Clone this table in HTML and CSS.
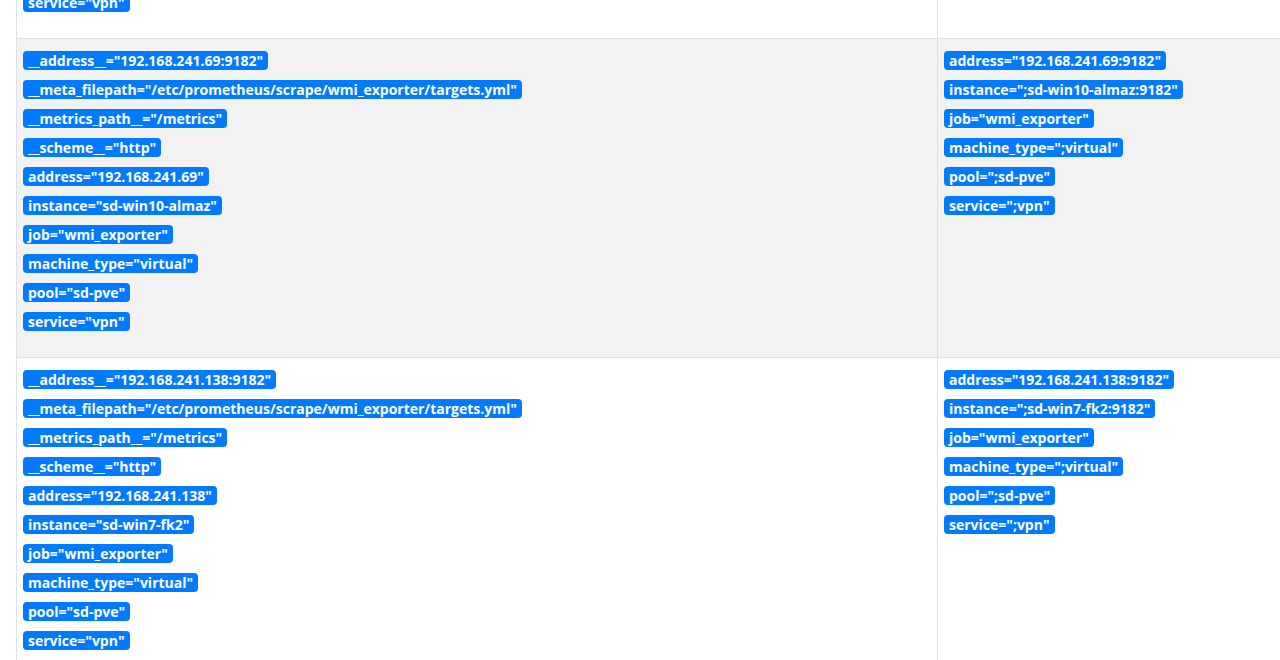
FILE: index.html
```html
<!DOCTYPE html>
<html>
<head>
<meta charset="utf-8">
<link rel="stylesheet" href="styles.css">
</head>
<body>
<div class="page">
  <table class="sd-table">
    <tbody>
      <tr class="row-white">
        <td class="col-disc">
          <div class="labels">
            <div><span class="badge">__address__="192.168.241.68:9182"</span></div>
            <div><span class="badge">__meta_filepath="/etc/prometheus/scrape/wmi_exporter/targets.yml"</span></div>
            <div><span class="badge">__metrics_path__="/metrics"</span></div>
            <div><span class="badge">__scheme__="http"</span></div>
            <div><span class="badge">address="192.168.241.68"</span></div>
            <div><span class="badge">instance="sd-win10-pc"</span></div>
            <div><span class="badge">job="wmi_exporter"</span></div>
            <div><span class="badge">machine_type="virtual"</span></div>
            <div><span class="badge">pool="sd-pve"</span></div>
            <div><span class="badge">service="vpn"</span></div>
          </div>
        </td>
        <td class="col-target">
          <div class="labels">
            <div><span class="badge">address="192.168.241.68:9182"</span></div>
            <div><span class="badge">instance=";sd-win10-pc:9182"</span></div>
            <div><span class="badge">job="wmi_exporter"</span></div>
            <div><span class="badge">machine_type=";virtual"</span></div>
            <div><span class="badge">pool=";sd-pve"</span></div>
            <div><span class="badge">service=";vpn"</span></div>
          </div>
        </td>
      </tr>
      <tr class="row-gray">
        <td class="col-disc">
          <div class="labels">
            <div><span class="badge">__address__="192.168.241.69:9182"</span></div>
            <div><span class="badge">__meta_filepath="/etc/prometheus/scrape/wmi_exporter/targets.yml"</span></div>
            <div><span class="badge">__metrics_path__="/metrics"</span></div>
            <div><span class="badge">__scheme__="http"</span></div>
            <div><span class="badge">address="192.168.241.69"</span></div>
            <div><span class="badge">instance="sd-win10-almaz"</span></div>
            <div><span class="badge">job="wmi_exporter"</span></div>
            <div><span class="badge">machine_type="virtual"</span></div>
            <div><span class="badge">pool="sd-pve"</span></div>
            <div><span class="badge">service="vpn"</span></div>
          </div>
        </td>
        <td class="col-target">
          <div class="labels">
            <div><span class="badge">address="192.168.241.69:9182"</span></div>
            <div><span class="badge">instance=";sd-win10-almaz:9182"</span></div>
            <div><span class="badge">job="wmi_exporter"</span></div>
            <div><span class="badge">machine_type=";virtual"</span></div>
            <div><span class="badge">pool=";sd-pve"</span></div>
            <div><span class="badge">service=";vpn"</span></div>
          </div>
        </td>
      </tr>
      <tr class="row-white">
        <td class="col-disc">
          <div class="labels">
            <div><span class="badge">__address__="192.168.241.138:9182"</span></div>
            <div><span class="badge">__meta_filepath="/etc/prometheus/scrape/wmi_exporter/targets.yml"</span></div>
            <div><span class="badge">__metrics_path__="/metrics"</span></div>
            <div><span class="badge">__scheme__="http"</span></div>
            <div><span class="badge">address="192.168.241.138"</span></div>
            <div><span class="badge">instance="sd-win7-fk2"</span></div>
            <div><span class="badge">job="wmi_exporter"</span></div>
            <div><span class="badge">machine_type="virtual"</span></div>
            <div><span class="badge">pool="sd-pve"</span></div>
            <div><span class="badge">service="vpn"</span></div>
          </div>
        </td>
        <td class="col-target">
          <div class="labels">
            <div><span class="badge">address="192.168.241.138:9182"</span></div>
            <div><span class="badge">instance=";sd-win7-fk2:9182"</span></div>
            <div><span class="badge">job="wmi_exporter"</span></div>
            <div><span class="badge">machine_type=";virtual"</span></div>
            <div><span class="badge">pool=";sd-pve"</span></div>
            <div><span class="badge">service=";vpn"</span></div>
          </div>
        </td>
      </tr>
    </tbody>
  </table>
</div>
</body>
</html>
```
FILE: styles.css
```css
html, body {
  margin: 0;
  padding: 0;
  background: #fff;
  font-family: "Open Sans", "Noto Sans", sans-serif;
  overflow: hidden;
}

.page {
  padding-left: 16px;
  margin-top: -281px;
}

.sd-table {
  border-collapse: collapse;
  width: 1300px;
  table-layout: fixed;
}

.sd-table td {
  border: 1px solid #dee2e6;
  vertical-align: top;
  padding: 12px 6px 26px 6px;
}

.col-disc {
  width: 908px;
}

.row-gray {
  background: #f2f2f2;
}

.row-white {
  background: #fff;
}

.labels {
  display: flex;
  flex-direction: column;
  gap: 10px;
}

.labels > div {
  display: flex;
}

.badge {
  display: block;
  background: #007bff;
  color: #fff;
  font-weight: 700;
  font-size: 14px;
  line-height: 13px;
  padding: 3px 5px;
  border-radius: 4px;
  white-space: nowrap;
}
```
